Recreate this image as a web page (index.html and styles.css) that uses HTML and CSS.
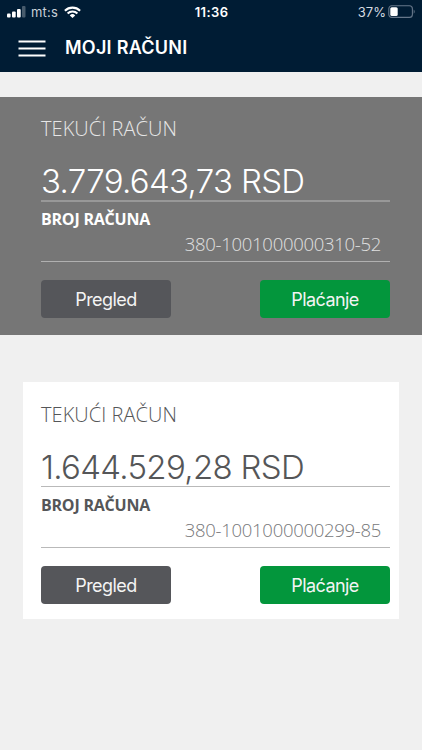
FILE: index.html
```
<!DOCTYPE html>
<html lang="sr">
<head>
<meta charset="utf-8">
<meta name="viewport" content="width=device-width, initial-scale=1">
<title>Moji računi</title>
<link rel="stylesheet" href="styles.css">
</head>
<body>
<header class="top">
  <div class="status">
    <div class="status-left">
      <svg class="signal" width="19" height="12" viewBox="0 0 19 12" fill="#fff"><rect x="0" y="7.5" width="3.6" height="4" rx="1"/><rect x="5" y="5.4" width="3.7" height="6.1" rx="1"/><rect x="10" y="3" width="3.7" height="8.5" rx="1"/><rect x="15" y="0" width="3.5" height="11.5" rx="1" opacity=".28"/></svg>
      <span class="carrier">mt:s</span>
      <svg class="wifi" width="17" height="12" viewBox="0 0 17 12" fill="none" stroke="#fff" stroke-width="2.1"><path d="M.9 4.7a10.9 10.9 0 0 1 15.2 0M3.6 7.5a7 7 0 0 1 9.8 0"/><path d="M8.5 12L5.8 9.4a3.9 3.9 0 0 1 5.4 0z" fill="#fff" stroke="none"/></svg>
    </div>
    <span class="clock">11:36</span>
    <div class="status-right">
      <span class="percent">37%</span>
      <svg class="battery" width="28" height="14" viewBox="0 0 28 14"><rect x=".8" y=".8" width="23.6" height="11.6" rx="3" fill="none" stroke="#66778a" stroke-width="1.1"/><rect x="2.3" y="2.3" width="7.4" height="8.6" rx="1.5" fill="#fff"/><path d="M25.7 4.4q2 2.2 0 4.4z" fill="#66778a"/></svg>
    </div>
  </div>
  <div class="bar">
    <svg class="menu" width="28" height="17" viewBox="0 0 28 17" stroke="#fff" stroke-width="2"><path d="M.5 1.5h27M.5 8.5h27M.5 15.5h27"/></svg>
    <h1 class="title">MOJI RAČUNI</h1>
  </div>
</header>
<main>
  <section class="card selected">
    <h2 class="kind">TEKUĆI RAČUN</h2>
    <div class="amount">3.779.643,73 RSD</div>
    <div class="account">
      <div class="label">BROJ RAČUNA</div>
      <div class="number">380-1001000000310-52</div>
    </div>
    <div class="actions"><button class="btn">Pregled</button><button class="btn pay">Plaćanje</button></div>
  </section>
  <section class="card">
    <h2 class="kind">TEKUĆI RAČUN</h2>
    <div class="amount">1.644.529,28 RSD</div>
    <div class="account">
      <div class="label">BROJ RAČUNA</div>
      <div class="number">380-1001000000299-85</div>
    </div>
    <div class="actions"><button class="btn">Pregled</button><button class="btn pay">Plaćanje</button></div>
  </section>
</main>
</body>
</html>
```
FILE: styles.css
```
* { box-sizing: border-box; }
body { margin: 0; min-height: 750px; background: #f0f0f0; font-family: Inter, sans-serif; }
.top { height: 72px; background: #001c34; color: #fff; }
.status { height: 24px; display: grid; grid-template-columns: 1fr auto 1fr; align-items: center; padding: 0 6px 0 7px; }
.status-left, .status-right { display: flex; align-items: center; }
.status-right { justify-content: flex-end; }
.signal { margin-right: 5px; }
.carrier { font-size: 13px; letter-spacing: .2px; color: #c9d1d8; }
.wifi { margin-left: 6px; }
.clock { font-size: 13px; font-weight: 600; letter-spacing: .4px; }
.percent { font-size: 13px; color: #d5dbe1; margin-right: 2px; }
.bar { height: 48px; display: flex; align-items: center; padding-left: 18px; }
.title { margin: 0 0 0 19px; font-size: 18px; line-height: 24px; font-weight: 600; letter-spacing: .25px; }
.card { width: 376px; height: 237px; margin: 47px 0 0 23px; padding: 19px 9px 0 18px; background: #fff; color: #555658; }
.card.selected { width: 100%; height: 238px; margin: 25px 0 0; padding: 18px 32px 0 41px; background: #767676; color: #fff; }
.kind { margin: 0; height: 28px; font: 300 20px/28px "Open Sans", sans-serif; letter-spacing: .05px; }
.selected .kind { color: #e6e6e6; }
.amount { height: 58px; padding-top: 18px; font-size: 33px; line-height: 40px; font-weight: 300; letter-spacing: -.68px; border-bottom: 1px solid #b9b9b9; white-space: nowrap; }
.selected .amount { height: 59px; border-bottom: 2px solid #989898; }
.account { height: 61px; padding-top: 6px; border-bottom: 1px solid #b9b9b9; font-family: "Open Sans", sans-serif; }
.selected .account { height: 60px; padding-top: 5px; border-color: #b0b0b0; }
.label { font-size: 16px; line-height: 24px; font-weight: 700; letter-spacing: -.22px; }
.number { margin: 1px 9px 0 0; font-size: 18.5px; line-height: 24px; font-weight: 300; letter-spacing: -.29px; text-align: right; color: #77787a; }
.selected .number { color: #e0e0e0; }
.actions { display: flex; justify-content: space-between; margin-top: 18px; }
.btn { width: 130px; height: 38px; padding: 1px 0 0; border: 0; border-radius: 4px; background: #55565a; color: #f4f4f4; font: 400 18px/37px Inter, sans-serif; letter-spacing: -.55px; }
.pay { background: #03963c; }
```
